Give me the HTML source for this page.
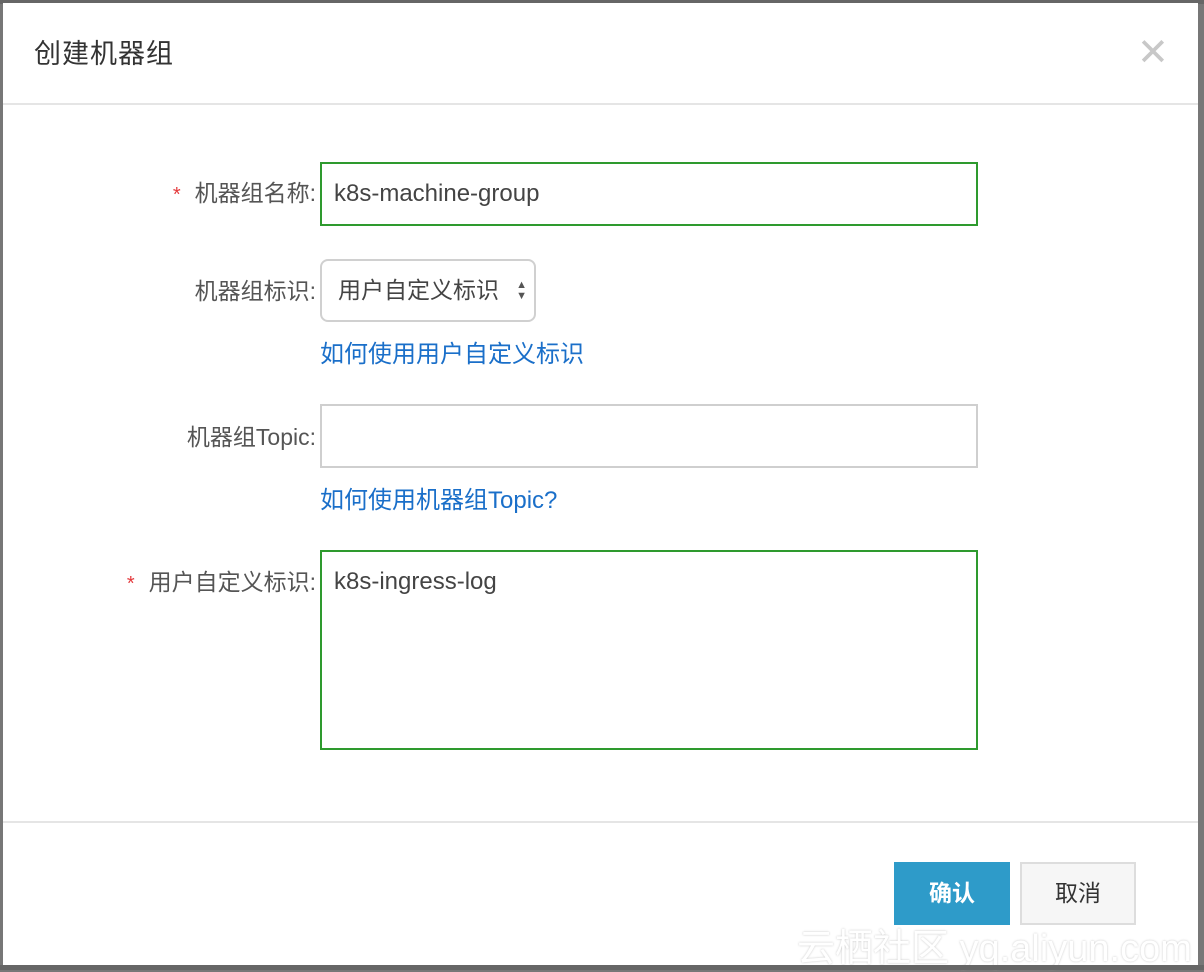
<!DOCTYPE html>
<html><head><meta charset="utf-8"><style>
*{margin:0;padding:0;box-sizing:border-box}
body{width:1204px;height:970px;background:#777;position:relative;overflow:hidden;font-family:"Liberation Sans","Noto Sans CJK SC",sans-serif;color:#333}
.dlg{position:absolute;left:3px;top:3px;width:1195px;height:962px;background:#fff}
.abs{position:absolute}
.lbl{position:absolute;font-size:23px;color:#555;text-align:right;right:882px;white-space:nowrap;line-height:30px}
.star{color:#e4393c;margin-right:14px;font-size:20px}
.inp{position:absolute;left:317px;width:658px;border:2px solid #2e9a2e;font-size:24px;color:#444;padding-left:12px}
.link{position:absolute;left:317px;font-size:24px;color:#1a6fc9;line-height:30px}
</style></head><body>
<div class="abs" style="left:0;top:0;width:1204px;height:4px;background:#666"></div>
<div class="dlg">
<div class="abs" style="left:31px;top:34px;font-size:27px;color:#333;line-height:34px;letter-spacing:1px">创建机器组</div>
<div class="abs" style="left:1134px;top:30px;font-size:38px;color:#c8c8c8;line-height:40px;font-weight:300">✕</div>
<div class="abs" style="left:0;top:100px;width:1195px;height:2px;background:#e5e5e5"></div>

<div class="lbl" style="top:175px"><span class="star">*</span>机器组名称:</div>
<div class="inp" style="top:159px;height:64px;line-height:60px">k8s-machine-group</div>

<div class="lbl" style="top:273px">机器组标识:</div>
<div class="abs" style="left:317px;top:256px;width:216px;height:63px;border:2px solid #d0d0d0;border-radius:8px;font-size:23px;color:#444;line-height:59px;padding-left:16px;white-space:nowrap">用户自定义标识<span style="position:absolute;right:7px;top:0;font-size:11px;line-height:11px;padding-top:19px;color:#555">▲<br>▼</span></div>
<div class="link" style="top:337px">如何使用用户自定义标识</div>

<div class="lbl" style="top:419px">机器组Topic:</div>
<div class="inp" style="top:401px;height:64px;border-color:#cfcfcf"></div>
<div class="link" style="top:483px">如何使用机器组Topic?</div>

<div class="lbl" style="top:564px"><span class="star">*</span>用户自定义标识:</div>
<div class="inp" style="top:547px;height:200px;padding-top:16px;line-height:28px">k8s-ingress-log</div>

<div class="abs" style="left:0;top:818px;width:1195px;height:2px;background:#e5e5e5"></div>
<div class="abs" style="left:891px;top:859px;width:116px;height:63px;background:#2e9bc9;color:#fff;font-size:23px;font-weight:bold;text-align:center;line-height:63px">确认</div>
<div class="abs" style="left:1017px;top:859px;width:116px;height:63px;background:#f6f6f6;border:2px solid #ddd;color:#333;font-size:23px;text-align:center;line-height:59px">取消</div>
<div class="abs" style="left:794px;top:914px;font-size:38px;color:#fff;opacity:.85;text-shadow:0 0 2px #bbb;white-space:nowrap">云栖社区 yq.aliyun.com</div>
</div>
<div class="abs" style="left:0;top:965px;width:1204px;height:5px;background:#666"></div>
</body></html>
